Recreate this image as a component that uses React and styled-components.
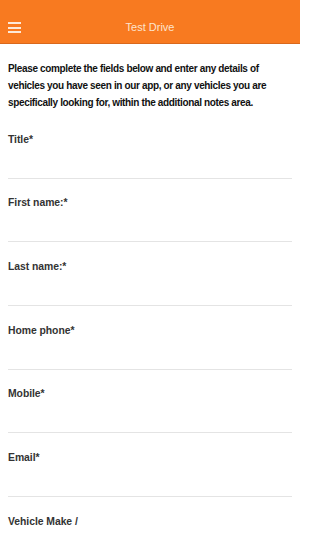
import React from 'react'
import styled, { createGlobalStyle } from 'styled-components'

const GlobalStyle = createGlobalStyle`
  html, body {
    margin: 0;
    padding: 0;
    background: #ffffff;
    font-family: "Liberation Sans", Arial, sans-serif;
  }
`

const fields = ['Title*', 'First name:*', 'Last name:*', 'Home phone*', 'Mobile*', 'Email*', 'Vehicle Make /']

const App = () => {
  return (
    <Page>
      <GlobalStyle />
      <Header>
        <MenuButton aria-label="Menu">
          <Bar />
          <Bar />
          <Bar />
        </MenuButton>
        <Title>Test Drive</Title>
      </Header>
      <Content>
        <Intro>
          Please complete the fields below and enter any details of vehicles you have seen in our app, or any
          vehicles you are specifically looking for, within the additional notes area.
        </Intro>
        {fields.map((f) => (
          <Field key={f}>
            <Label>{f}</Label>
            <Input type="text" />
          </Field>
        ))}
      </Content>
    </Page>
  )
}

const Page = styled.div`
  width: 300px;
  height: 533px;
  overflow: hidden;
  background: #ffffff;
`

const Header = styled.header`
  position: relative;
  height: 31px;
  padding-top: 12px;
  background: #f87a20;
  border-bottom: 1px solid #d9681c;
  display: flex;
  align-items: center;
  justify-content: center;
`

const MenuButton = styled.div`
  position: absolute;
  left: 8px;
  top: 22px;
  width: 13px;
  display: flex;
  flex-direction: column;
  gap: 2.5px;
`

const Bar = styled.span`
  display: block;
  height: 2px;
  background: #fde9d8;
`

const Title = styled.h1`
  margin: 0;
  font-size: 11px;
  line-height: 13px;
  font-weight: 400;
  color: #fde4cd;
`

const Content = styled.main`
  padding: 15.5px 8px 0;
`

const Intro = styled.p`
  margin: 0 0 22px;
  font-size: 10px;
  line-height: 17px;
  letter-spacing: -0.35px;
  font-weight: 700;
  color: #111111;
`

const Field = styled.div`
  display: flex;
  flex-direction: column;
  border-bottom: 1px solid #e4e4e4;
  margin-bottom: 17.7px;
`

const Label = styled.label`
  font-size: 10.4px;
  line-height: 13px;
  letter-spacing: -0.05px;
  font-weight: 700;
  color: #333333;
`

const Input = styled.input`
  height: 32px;
  border: none;
  outline: none;
  background: transparent;
  padding: 0;
  font-family: inherit;
`

export default App
